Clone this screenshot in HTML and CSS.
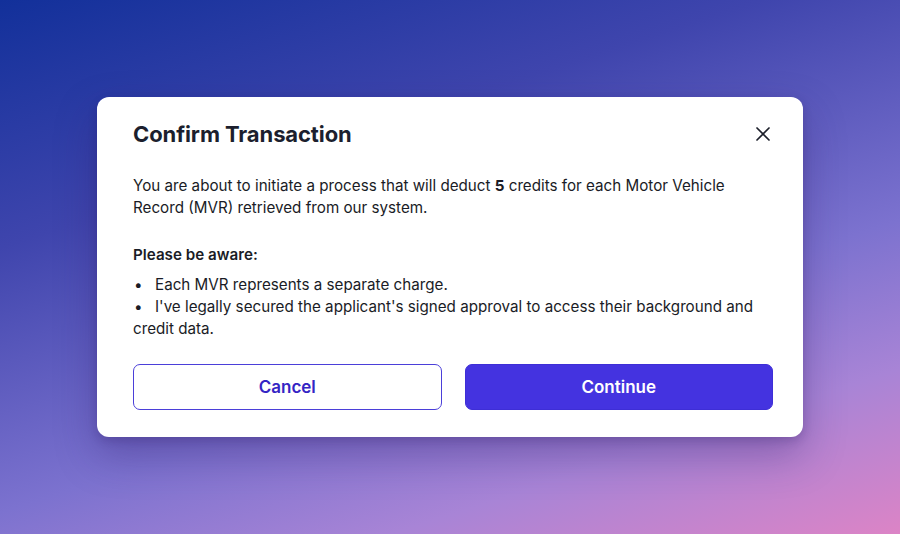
FILE: index.html
```html
<!DOCTYPE html>
<html lang="en">
<head>
  <meta charset="UTF-8">
  <meta name="viewport" content="width=device-width, initial-scale=1.0">
  <title>Confirm Transaction</title>
  <link rel="stylesheet" href="styles.css">
</head>
<body>
  <div class="modal">
    <div class="modal-header">
      <h2>Confirm Transaction</h2>
      <button class="close" aria-label="Close">
        <svg width="16" height="16" viewBox="0 0 16 16" fill="none" stroke="#1c1f2a" stroke-width="1.7" stroke-linecap="round">
          <path d="M2 2 L14 14 M14 2 L2 14"/>
        </svg>
      </button>
    </div>

    <p class="intro">You are about to initiate a process that will deduct <b>5</b> credits for each Motor Vehicle Record (MVR) retrieved from our system.</p>

    <p class="aware">Please be aware:</p>
    <ul class="notes">
      <li>Each MVR represents a separate charge.</li>
      <li>I've legally secured the applicant's signed approval to access their background and credit data.</li>
    </ul>

    <div class="actions">
      <button class="btn btn-outline">Cancel</button>
      <button class="btn btn-primary">Continue</button>
    </div>
  </div>
</body>
</html>
```

FILE: styles.css
```css
* {
  margin: 0;
  padding: 0;
  box-sizing: border-box;
}

body {
  font-family: 'Inter', 'Noto Sans', sans-serif;
  background: linear-gradient(162deg, #12309a 0%, #3f45ad 30%, #7c72cf 62%, #a884d6 80%, #dc84c6 100%);
  display: flex;
  justify-content: center;
  align-items: center;
  height: 100vh;
  overflow: hidden;
  color: #1a1c26;
}

.modal {
  width: 706px;
  background: #fff;
  border-radius: 12px;
  padding: 24px 30px 27px 36px;
  box-shadow: 0 18px 40px rgba(50, 30, 110, 0.35), 0 4px 10px rgba(40, 20, 90, 0.2);
}

.modal-header {
  display: flex;
  justify-content: space-between;
  align-items: center;
  height: 24px;
  margin-top: 1px;
}

.modal-header h2 {
  font-size: 22px;
  font-weight: 700;
  line-height: 24px;
  color: #1c1f2e;
  letter-spacing: -0.1px;
}

.close {
  background: none;
  border: none;
  width: 24px;
  height: 24px;
  display: flex;
  align-items: center;
  justify-content: center;
  margin-right: -2px;
  cursor: pointer;
}

.intro,
.aware,
.notes {
  font-size: 15.2px;
  line-height: 22px;
}

.intro {
  margin-top: 29px;
  padding-right: 4px;
}

.intro b {
  font-weight: 700;
}

.aware {
  margin-top: 25px;
  font-weight: 600;
}

.notes {
  list-style: none;
  margin-top: 8px;
}

.notes li::before {
  content: "\2022";
  display: inline-block;
  width: 21px;
  padding-left: 1px;
}

.actions {
  display: grid;
  grid-template-columns: 1fr 1fr;
  gap: 23px;
  margin-top: 24px;
}

.btn {
  height: 46px;
  border-radius: 7px;
  font-family: inherit;
  font-size: 17px;
  font-weight: 600;
  cursor: pointer;
}

.btn-outline {
  background: #fff;
  border: 1.5px solid #4b3fd9;
  color: #3424c4;
}

.btn-primary {
  background: #4433e0;
  border: 1px solid #3e2ed6;
  color: #fff;
}
```
